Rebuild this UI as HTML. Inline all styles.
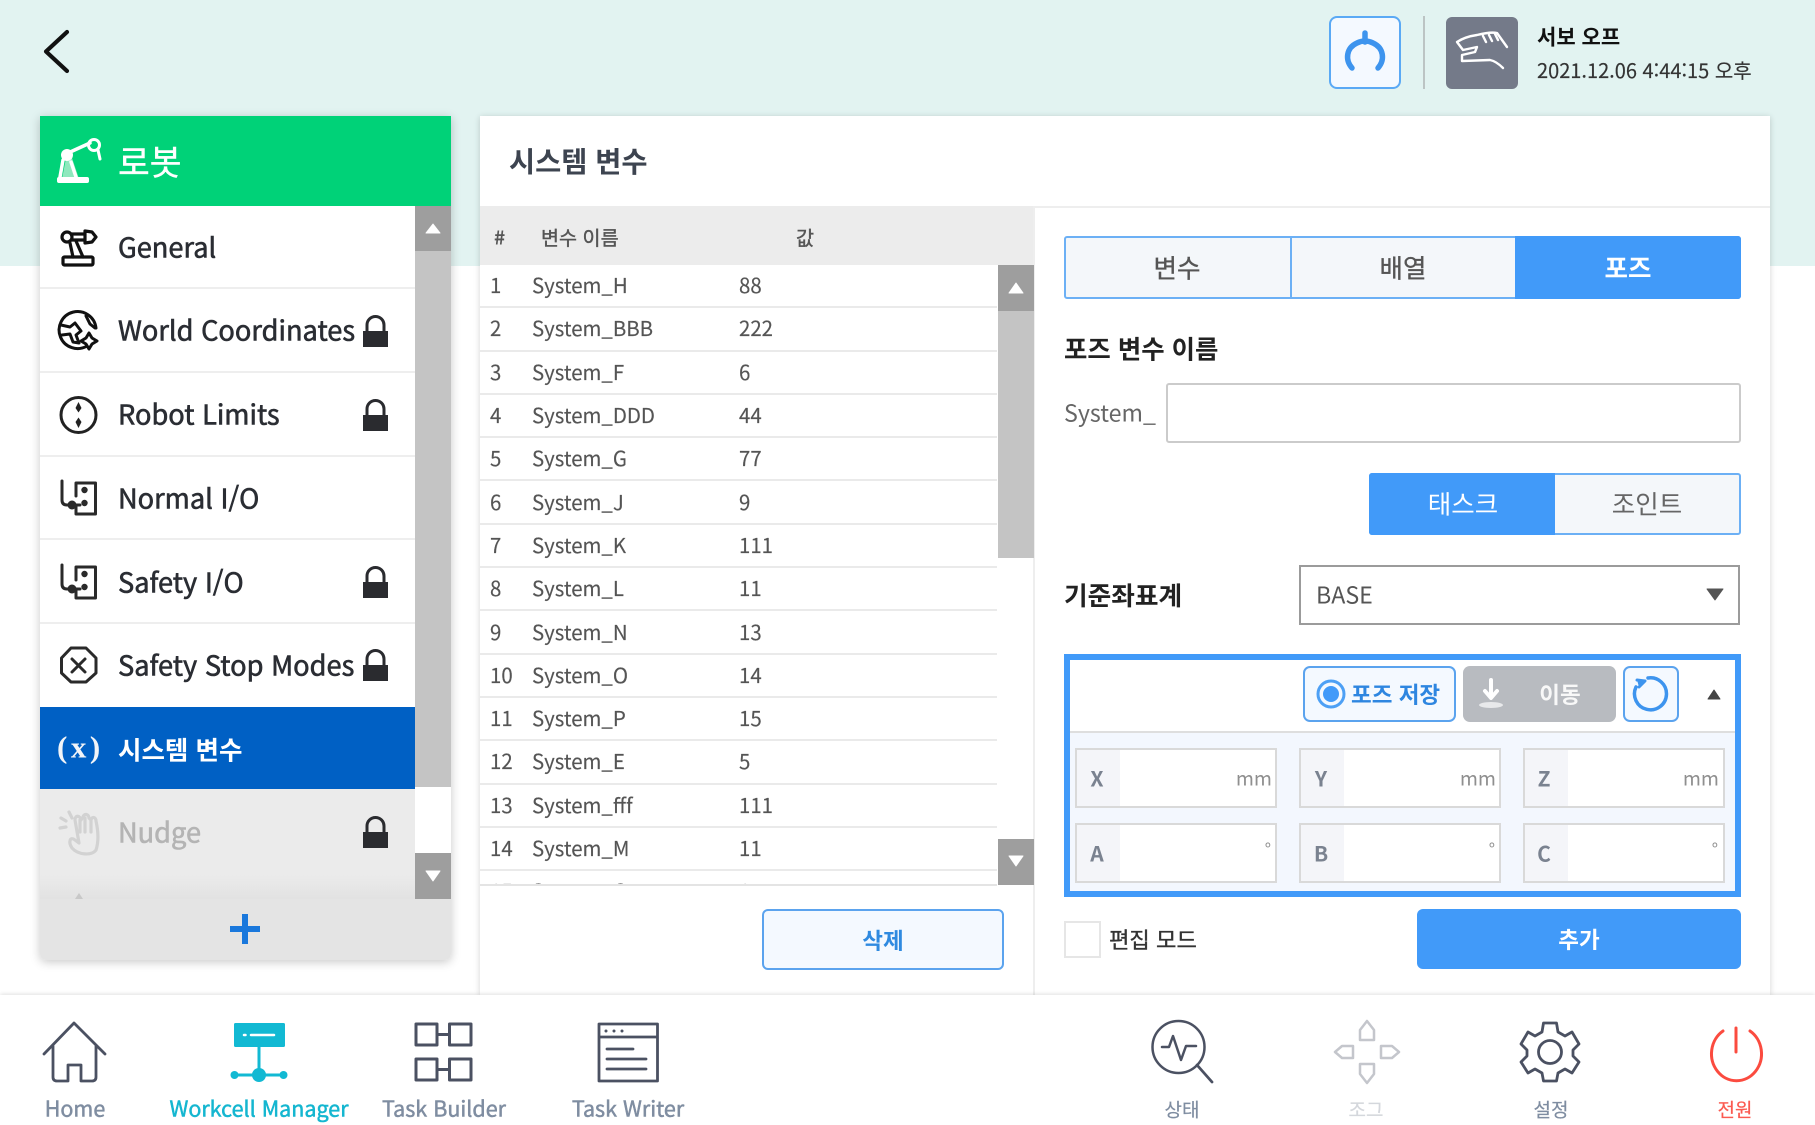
<!DOCTYPE html>
<html lang="ko"><head><meta charset="utf-8"><title>시스템 변수</title>
<style>
*{box-sizing:border-box}
html,body{margin:0;padding:0;width:1815px;height:1125px;overflow:hidden;background:#fff}
body{position:relative;font-family:"Noto Sans CJK KR","Liberation Sans",sans-serif;color:#333}
.b{position:absolute}
.t{position:absolute;line-height:1;white-space:nowrap;transform:translateY(-50%)}
.c{transform:translate(-50%,-50%)}
.r{transform:translate(-100%,-50%)}
.n{font-size:27.2px;color:#2a2d33;left:118px;-webkit-text-stroke:.6px currentColor}
.sep{position:absolute;left:40px;width:375px;height:2px;background:#eee}
.row{position:absolute;left:0;width:517px;height:43.3px;border-bottom:2px solid #eaeaea}
.row span{position:absolute;top:calc(50% - 1.5px);transform:translateY(-50%);line-height:1;font-size:20.4px;color:#555;-webkit-text-stroke:.15px currentColor}
.row span:nth-child(1){left:10px}.row span:nth-child(2){left:52px}.row span:nth-child(3){left:259px}
.f{position:absolute;width:202px;height:60px;background:#fff;border:2px solid #d9d9d9}
.f i{position:absolute;left:0;top:0;width:43px;height:100%;background:#f4f5f9}
.lab{font-size:21px;color:#7a8290;font-weight:700}
.u{font-size:19.5px;color:#8f8f8f}
.ft{font-size:21.5px;color:#7f8da1;-webkit-text-stroke:.5px currentColor}
.med{-webkit-text-stroke:.35px currentColor}
</style></head><body>
<div class="b" style="left:0;top:0;width:1815px;height:266px;background:#e2f3f1"></div>

<!-- header -->
<div class="b" style="left:1329px;top:16px;width:72px;height:73px;background:#f4f9ff;border:2px solid #5aa9f5;border-radius:8px"></div>
<div class="b" style="left:1423px;top:16px;width:2px;height:73px;background:#bcc4c4"></div>
<div class="b" style="left:1446px;top:17px;width:72px;height:72px;background:#747a89;border-radius:6px"></div>
<div class="t" style="left:1537px;top:37px;font-size:21px;font-weight:700;color:#111">서보 오프</div>
<div class="t" style="left:1537px;top:70px;font-size:20px;color:#333;-webkit-text-stroke:.15px currentColor">2021.12.06 4:44:15 오후</div>

<!-- left panel -->
<div class="b" style="left:40px;top:116px;width:411px;height:844px;background:#fff;box-shadow:0 2px 10px rgba(0,0,0,.22);border-radius:0 0 6px 6px"></div>
<div class="b" style="left:40px;top:116px;width:411px;height:90px;background:#00d278"></div>
<div class="t" style="left:118px;top:160px;font-size:34.5px;color:#fff;-webkit-text-stroke:.4px #fff">로봇</div>
<div class="b" style="left:415px;top:206px;width:36px;height:581px;background:#c4c4c4"></div>
<div class="b" style="left:415px;top:206px;width:36px;height:45px;background:#9e9e9e"></div>
<div class="b" style="left:415px;top:853px;width:36px;height:46px;background:#9e9e9e"></div>
<div class="sep" style="top:287px"></div><div class="sep" style="top:371px"></div><div class="sep" style="top:455px"></div><div class="sep" style="top:538px"></div><div class="sep" style="top:622px"></div>
<div class="t n" style="top:246px">General</div>
<div class="t n" style="top:329px">World Coordinates</div>
<div class="t n" style="top:413px">Robot Limits</div>
<div class="t n" style="top:497px">Normal I/O</div>
<div class="t n" style="top:581px">Safety I/O</div>
<div class="t n" style="top:664px">Safety Stop Modes</div>
<div class="b" style="left:40px;top:707px;width:375px;height:82px;background:#0060c4"></div>
<div class="t" style="left:57px;top:747px;font-size:31px;font-weight:700;color:#f1f4f8;font-family:'Liberation Serif',serif;letter-spacing:3.5px">(x)</div>
<div class="t n" style="top:749px;color:#fff;font-weight:700;font-size:25.5px;-webkit-text-stroke:0">시스템 변수</div>
<div class="b" style="left:40px;top:789px;width:375px;height:110px;background:linear-gradient(#ebebeb 78%,#e2e2e2)"></div>
<div class="t n" style="top:831px;color:#b4b4b4">Nudge</div>
<div class="b" style="left:40px;top:899px;width:411px;height:61px;background:#e4e4e4;border-radius:0 0 6px 6px"></div>

<!-- main panel -->
<div class="b" style="left:480px;top:116px;width:1290px;height:879px;background:#fff;box-shadow:0 1px 6px rgba(0,0,0,.18)"></div>
<div class="t" style="left:509px;top:161px;font-size:28.4px;font-weight:700;color:#3d4450">시스템 변수</div>
<div class="b" style="left:480px;top:206px;width:1290px;height:2px;background:#eeeeee"></div>
<div class="b" style="left:1033px;top:206px;width:2px;height:789px;background:#eeeeee"></div>
<div class="b" style="left:480px;top:206px;width:553px;height:59px;background:#ececec"></div>
<div class="t" style="left:494px;top:237px;font-size:19px;font-weight:700;color:#555">#</div>
<div class="t" style="left:541px;top:237px;font-size:19.6px;color:#555;-webkit-text-stroke:.4px currentColor">변수 이름</div>
<div class="t" style="left:796px;top:237px;font-size:19.6px;color:#555;-webkit-text-stroke:.4px currentColor">값</div>

<div class="b" style="left:480px;top:265px;width:517px;height:621px;overflow:hidden;border-bottom:2px solid #e4e4e4">
<div class="row" style="top:0"><span>1</span><span>System_H</span><span>88</span></div>
<div class="row" style="top:43.3px"><span>2</span><span>System_BBB</span><span>222</span></div>
<div class="row" style="top:86.6px"><span>3</span><span>System_F</span><span>6</span></div>
<div class="row" style="top:129.9px"><span>4</span><span>System_DDD</span><span>44</span></div>
<div class="row" style="top:173.2px"><span>5</span><span>System_G</span><span>77</span></div>
<div class="row" style="top:216.5px"><span>6</span><span>System_J</span><span>9</span></div>
<div class="row" style="top:259.8px"><span>7</span><span>System_K</span><span>111</span></div>
<div class="row" style="top:303.1px"><span>8</span><span>System_L</span><span>11</span></div>
<div class="row" style="top:346.4px"><span>9</span><span>System_N</span><span>13</span></div>
<div class="row" style="top:389.7px"><span>10</span><span>System_O</span><span>14</span></div>
<div class="row" style="top:433px"><span>11</span><span>System_P</span><span>15</span></div>
<div class="row" style="top:476.3px"><span>12</span><span>System_E</span><span>5</span></div>
<div class="row" style="top:519.6px"><span>13</span><span>System_fff</span><span>111</span></div>
<div class="row" style="top:562.9px"><span>14</span><span>System_M</span><span>11</span></div>
<div class="row" style="top:606.2px"><span>15</span><span>System_C</span><span>1</span></div>
</div>
<div class="b" style="left:998px;top:265px;width:36px;height:293px;background:#c4c4c4"></div>
<div class="b" style="left:998px;top:265px;width:36px;height:46px;background:#9e9e9e"></div>
<div class="b" style="left:998px;top:839px;width:36px;height:46px;background:#9e9e9e"></div>
<div class="b" style="left:762px;top:909px;width:242px;height:61px;background:#f4f9ff;border:2px solid #5ba3ee;border-radius:6px"></div>
<div class="t c" style="left:883px;top:940px;font-size:22.5px;font-weight:700;color:#2f8ae0">삭제</div>

<!-- tabs -->
<div class="b" style="left:1064px;top:236px;width:677px;height:63px;background:#f4f7fa;border:2px solid #6cb0f5;border-radius:3px"></div>
<div class="b" style="left:1290px;top:236px;width:2px;height:63px;background:#6cb0f5"></div>
<div class="b" style="left:1515px;top:236px;width:226px;height:63px;background:#419af9;border-radius:0 3px 3px 0"></div>
<div class="t c med" style="left:1177px;top:267px;font-size:25.5px;color:#555">변수</div>
<div class="t c med" style="left:1403px;top:267px;font-size:25.5px;color:#555">배열</div>
<div class="t c" style="left:1628px;top:267px;font-size:25.5px;font-weight:700;color:#fff">포즈</div>

<div class="t" style="left:1064px;top:349px;font-size:25.4px;font-weight:700;color:#222">포즈 변수 이름</div>
<div class="t" style="left:1064px;top:412px;font-size:23.2px;color:#666">System_</div>
<div class="b" style="left:1166px;top:383px;width:575px;height:60px;background:#fff;border:2px solid #cbcbcb;border-radius:3px"></div>

<div class="b" style="left:1369px;top:473px;width:372px;height:62px;background:#f4f7fa;border:2px solid #6cb0f5;border-radius:3px"></div>
<div class="b" style="left:1369px;top:473px;width:186px;height:62px;background:#419af9;border-radius:3px 0 0 3px"></div>
<div class="t c" style="left:1463px;top:503px;font-size:25.5px;color:#fff">태스크</div>
<div class="t c" style="left:1647px;top:503px;font-size:25.5px;color:#666">조인트</div>

<div class="t" style="left:1064px;top:595px;font-size:25.7px;font-weight:700;color:#222">기준좌표계</div>
<div class="b" style="left:1299px;top:565px;width:441px;height:60px;background:#fff;border:2px solid #9b9b9b"></div>
<div class="t" style="left:1316px;top:594px;font-size:23.2px;color:#555">BASE</div>

<!-- pose box -->
<div class="b" style="left:1064px;top:654px;width:677px;height:243px;background:#f3f7fe;border:6px solid #419af9"></div>
<div class="b" style="left:1070px;top:660px;width:665px;height:73px;background:#fff;border-bottom:2px solid #dedede"></div>
<div class="b" style="left:1303px;top:666px;width:153px;height:56px;background:#f4f9ff;border:2px solid #5ba3ee;border-radius:7px"></div>
<div class="t" style="left:1351px;top:694px;font-size:22.5px;font-weight:700;color:#2e86e0">포즈 저장</div>
<div class="b" style="left:1463px;top:666px;width:153px;height:56px;background:#b8bbc0;border-radius:7px"></div>
<div class="t c" style="left:1560px;top:694px;font-size:22.5px;font-weight:700;color:#f8f8f8">이동</div>
<div class="b" style="left:1623px;top:666px;width:56px;height:56px;background:#f4f9ff;border:2px solid #5ba3ee;border-radius:7px"></div>

<div class="f" style="left:1075px;top:748px"><i></i></div>
<div class="f" style="left:1299px;top:748px"><i></i></div>
<div class="f" style="left:1523px;top:748px"><i></i></div>
<div class="f" style="left:1075px;top:823px"><i></i></div>
<div class="f" style="left:1299px;top:823px"><i></i></div>
<div class="f" style="left:1523px;top:823px"><i></i></div>
<div class="t c lab" style="left:1097px;top:779px">X</div>
<div class="t c lab" style="left:1321px;top:779px">Y</div>
<div class="t c lab" style="left:1544px;top:779px">Z</div>
<div class="t c lab" style="left:1097px;top:854px">A</div>
<div class="t c lab" style="left:1321px;top:854px">B</div>
<div class="t c lab" style="left:1544px;top:854px">C</div>
<div class="t r u" style="left:1272px;top:777px">mm</div>
<div class="t r u" style="left:1496px;top:777px">mm</div>
<div class="t r u" style="left:1719px;top:777px">mm</div>
<div class="t r u" style="left:1271px;top:848px;font-size:17px">°</div>
<div class="t r u" style="left:1495px;top:848px;font-size:17px">°</div>
<div class="t r u" style="left:1718px;top:848px;font-size:17px">°</div>

<div class="b" style="left:1064px;top:921px;width:37px;height:37px;background:#fff;border:2px solid #e6e6e6"></div>
<div class="t med" style="left:1109px;top:939px;font-size:22.2px;color:#333">편집 모드</div>
<div class="b" style="left:1417px;top:909px;width:324px;height:60px;background:#419af9;border-radius:6px"></div>
<div class="t c" style="left:1579px;top:939px;font-size:22.5px;font-weight:700;color:#fff">추가</div>

<!-- footer -->
<div class="b" style="left:0;top:995px;width:1815px;height:130px;background:#fff;box-shadow:0 -1px 4px rgba(0,0,0,.12)"></div>
<div class="t c ft" style="left:75px;top:1108px">Home</div>
<div class="t c ft" style="left:259px;top:1108px;color:#14b6d0">Workcell Manager</div>
<div class="t c ft" style="left:444px;top:1108px">Task Builder</div>
<div class="t c ft" style="left:628px;top:1108px">Task Writer</div>
<div class="t c ft" style="left:1182px;top:1109px;font-size:19px;-webkit-text-stroke:.2px currentColor">상태</div>
<div class="t c ft" style="left:1366px;top:1109px;font-size:19px;color:#d4d7dc;-webkit-text-stroke:.2px currentColor">조그</div>
<div class="t c ft" style="left:1551px;top:1109px;font-size:19px;-webkit-text-stroke:.2px currentColor">설정</div>
<div class="t c ft" style="left:1735px;top:1109px;font-size:19px;color:#fb5a50;-webkit-text-stroke:.2px currentColor">전원</div>

<svg class="b" style="left:0;top:0" width="1815" height="1125" viewBox="0 0 1815 1125" fill="none" stroke-linecap="round" stroke-linejoin="round">
<!-- back -->
<path d="M67 32 L46 51.500 L67 71" stroke="#111" stroke-width="4.200"/>
<!-- gripper button -->
<path d="M1352 68 C1345 60 1346 48 1357 43 Q1365 39 1373 43 C1384 48 1385 60 1378 68 M1365 33 V42" stroke="#3d94ee" stroke-width="5.500"/>
<!-- hand -->
<g transform="translate(1445 16)" stroke="#fff" stroke-width="2.400"><path d="M12 26 C18 22 25 20 32 19 C40 17 47 16 52 17 L62 31 M12 26 L18 34 L32 31 L30 36 L17 39 L17 45 L45 44 C50 45 55 49 58 52"/><path d="M38 20 L41 26 M44 19 L47 25 M50 18 L53 24"/></g>
<!-- robot header -->
<path d="M62 179 L66 158 H72 L79 179 Z" fill="#8fe8bd"/><rect x="57" y="177" width="32" height="6" rx="2" fill="#fff"/>
<path d="M60 177 L63 160 M76 177 L71 162 M68 153 L90 143" stroke="#fff" stroke-width="3.500"/><circle cx="67" cy="155" r="6" fill="#fff"/><circle cx="94" cy="145" r="5.500" stroke="#fff" stroke-width="3"/><path d="M98 150 L100 159" stroke="#fff" stroke-width="3"/>
<!-- general -->
<g stroke="#111" stroke-width="3.200"><rect x="63" y="257" width="30" height="8" rx="1.500"/><circle cx="67" cy="237" r="5"/><path d="M70 243 L73 257 M76 241 L83 257 M72 234 H84 M72 240 H84 M85 231 L92 232 L96 237 L92 242 L85 243 Z"/></g>
<!-- world -->
<g stroke="#111" stroke-width="3"><path d="M87 346 A18.500 18.500 0 1 1 96 328"/><path d="M61 325 L70 327 L75 323 L81 331 L76 335 L79 343 L73 342 L70 334 L62 335 M86 316 L90 324 L95 328"/><path d="M89 333 L92 338 L97 341 L92 344 L89 349 L86 344 L81 341 L86 338 Z"/></g>
<!-- limits -->
<circle cx="78.500" cy="415" r="17.500" stroke="#222" stroke-width="3"/><path d="M78.500 402 L81.500 408 L78.500 412.500 L75.500 408 Z M78.500 428 L81.500 422 L78.500 417.500 L75.500 422 Z" fill="#222"/>
<!-- IO -->
<g stroke="#2a2a2a" stroke-width="3"><path d="M62 481 V500 Q62 505 67 505 H80 M76 496 V483 H95.500 V514 H76 V505"/><circle cx="72" cy="505" r="3"/><circle cx="84.500" cy="490" r="1.700" fill="#2a2a2a"/><circle cx="84.500" cy="503" r="1.700" fill="#2a2a2a"/></g>
<g stroke="#2a2a2a" stroke-width="3"><path d="M62 565 V584 Q62 589 67 589 H80 M76 580 V567 H95.500 V598 H76 V589"/><circle cx="72" cy="589" r="3"/><circle cx="84.500" cy="574" r="1.700" fill="#2a2a2a"/><circle cx="84.500" cy="587" r="1.700" fill="#2a2a2a"/></g>
<!-- octagon -->
<path d="M71 648 H86 L96 658 V673 L86 682 H71 L61.500 673 V658 Z M72 659 L85 672 M85 659 L72 672" stroke="#2a2a2a" stroke-width="3"/>
<!-- nudge hand -->
<g stroke="#d2d2d2" stroke-width="3.200"><path d="M72 848 C68 842 70 836 75 840 L79 843 L75 820 C75 815 80 815 81 820 L83 817 C84 813 89 814 89 818 L91 820 C92 816 96 817 96 821 C98 830 99 841 96 850 C92 856 78 855 72 848 Z M85 818 V832 M91 820 V832 M80 820 V832"/><path d="M69 812 L72 818 M61 818 L66 821 M60 828 L66 827"/></g>
<!-- locks -->
<g fill="#2a2b2f" stroke="none">
<path d="M363 331 H388 V347 H363 Z"/><path d="M367 331 V325 A8.500 8.500 0 0 1 384 325 V331" fill="none" stroke="#2a2b2f" stroke-width="3"/>
<path d="M363 415 H388 V431 H363 Z"/><path d="M367 415 V409 A8.500 8.500 0 0 1 384 409 V415" fill="none" stroke="#2a2b2f" stroke-width="3"/>
<path d="M363 582 H388 V598 H363 Z"/><path d="M367 582 V576 A8.500 8.500 0 0 1 384 576 V582" fill="none" stroke="#2a2b2f" stroke-width="3"/>
<path d="M363 665 H388 V681 H363 Z"/><path d="M367 665 V659 A8.500 8.500 0 0 1 384 659 V665" fill="none" stroke="#2a2b2f" stroke-width="3"/>
<path d="M363 832 H388 V848 H363 Z"/><path d="M367 832 V826 A8.500 8.500 0 0 1 384 826 V832" fill="none" stroke="#2a2b2f" stroke-width="3"/>
</g>
<!-- scroll arrows -->
<path d="M433 224 L440 233 H426 Z M433 881 L426 871 H440 Z" fill="#fff" stroke="#fff" stroke-width="1"/>
<path d="M1016 283 L1023 293 H1009 Z M1016 866 L1009 856 H1023 Z" fill="#fff" stroke="#fff" stroke-width="1"/>
<!-- plus -->
<path d="M242 914 H248 V926 H260 V932 H248 V944 H242 V932 H230 V926 H242 Z" fill="#1a78dc"/>
<path d="M79 893 L83 899 H75 Z" fill="#c8c8c8"/>
<!-- select, triangle -->
<path d="M1707 589 H1723 L1715 600 Z" fill="#555" stroke="#555"/>
<path d="M1714 690 L1720 699 H1708 Z" fill="#444" stroke="#444"/>
<!-- radio -->
<circle cx="1331" cy="694" r="13" stroke="#4da0f5" stroke-width="3"/><circle cx="1331" cy="694" r="8" fill="#419af9"/>
<!-- move -->
<path d="M1491 680 V696 M1485 691 L1491 698 L1497 691" stroke="#fff" stroke-width="4"/><ellipse cx="1491" cy="705" rx="12" ry="3" fill="#e8e9eb"/>
<!-- refresh -->
<path d="M1648 678 A16 16 0 1 1 1636 687" stroke="#3d94ee" stroke-width="3.500"/><path d="M1637 680 L1645 681 L1639 687" stroke="#3d94ee" stroke-width="3" fill="#3d94ee"/>
<!-- home -->
<path d="M44 1054 L74 1023 L105 1054 M53 1046 V1077 Q53 1081 57 1081 H68 V1065 H81 V1081 H92 Q96 1081 96 1077 V1046" stroke="#4b5162" stroke-width="2.800"/>
<!-- workcell -->
<rect x="234" y="1023" width="51" height="24" rx="1.500" fill="#12b9d3"/><path d="M244 1035 H245.500 M251 1035 H274" stroke="#fff" stroke-width="2.500"/>
<path d="M259 1047 V1075 M234 1075 H284" stroke="#12b9d3" stroke-width="3"/><circle cx="234.500" cy="1075" r="4" fill="#12b9d3"/><circle cx="259" cy="1075" r="7" fill="#12b9d3"/><circle cx="283.500" cy="1075" r="4" fill="#12b9d3"/>
<!-- task builder -->
<path d="M416 1024 H437 V1045 H416 Z M449.500 1024 H471 V1045 H449.500 Z M416 1059 H437 V1080 H416 Z M449.500 1059 H471 V1080 H449.500 Z M437 1034.500 H449.500 M437 1069.500 H449.500" stroke="#4b5162" stroke-width="3"/>
<!-- task writer -->
<path d="M599 1024 H657.500 V1081 H599 Z M599 1037 H657.500 M607 1049 H633 M607 1059 H646 M607 1069 H646" stroke="#4b5162" stroke-width="2.800"/>
<circle cx="606" cy="1031" r="1.500" fill="#4b5162"/><circle cx="614" cy="1031" r="1.500" fill="#4b5162"/><circle cx="622" cy="1031" r="1.500" fill="#4b5162"/>
<!-- status -->
<circle cx="1178.500" cy="1047" r="26" stroke="#4b5162" stroke-width="2.500"/><path d="M1197 1065 L1212 1082" stroke="#4b5162" stroke-width="2.800"/><path d="M1162 1047 H1169 L1173 1036 L1181 1060 L1186 1046 H1196" stroke="#4b5162" stroke-width="2.500"/>
<!-- jog -->
<path d="M1367 1021 L1374 1030 V1040 H1360 V1030 Z M1367 1083 L1374 1074 V1064 H1360 V1074 Z M1335 1052 L1342 1046 H1353 V1058 H1342 Z M1399 1052 L1392 1046 H1381 V1058 H1392 Z" stroke="#c4c6cc" stroke-width="2.500"/>
<!-- gear -->
<path d="M1543.500 1023 H1556.500 L1558 1032 L1565 1036 L1572 1032 L1579 1044 L1573 1050 V1056 L1579 1062 L1572 1073 L1565 1069 L1558 1073 L1556.500 1081 H1543.500 L1542 1073 L1535 1069 L1528 1073 L1521 1062 L1527 1056 V1050 L1521 1044 L1528 1032 L1535 1036 L1542 1032 Z" stroke="#4b5162" stroke-width="2.800"/><circle cx="1550" cy="1052" r="11.500" stroke="#4b5162" stroke-width="2.800"/>
<!-- power -->
<path d="M1723 1031 A25 27 0 1 0 1750 1031 M1736 1028 V1052" stroke="#fb4b3f" stroke-width="3"/>
</svg>
</body></html>
